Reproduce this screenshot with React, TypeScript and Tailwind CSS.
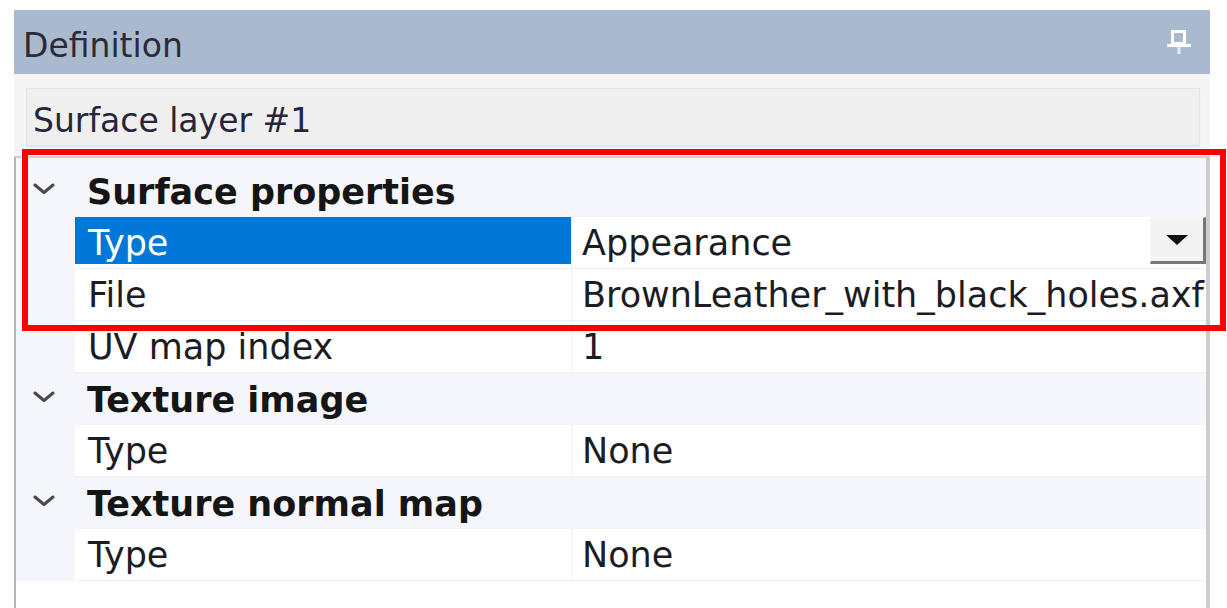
type Row =
  | { kind: 'cat'; label: string }
  | { kind: 'prop'; label: string; value: string; selected?: boolean; dropdown?: boolean }

const rows: Row[] = [
  { kind: 'cat', label: 'Surface properties' },
  { kind: 'prop', label: 'Type', value: 'Appearance', selected: true, dropdown: true },
  { kind: 'prop', label: 'File', value: 'BrownLeather_with_black_holes.axf' },
  { kind: 'prop', label: 'UV map index', value: '1' },
  { kind: 'cat', label: 'Texture image' },
  { kind: 'prop', label: 'Type', value: 'None' },
  { kind: 'cat', label: 'Texture normal map' },
  { kind: 'prop', label: 'Type', value: 'None' },
]

const PinIcon = () => (
  <svg width="26" height="26" viewBox="0 0 26 26" fill="none">
    <rect x="6.5" y="2.5" width="12" height="12" stroke="white" strokeWidth="3" />
    <rect x="1" y="15" width="24" height="3" fill="white" />
    <rect x="11.5" y="18" width="3" height="7" fill="#e8edf4" />
  </svg>
)

const Chevron = () => (
  <svg width="22" height="12" viewBox="0 0 22 12" fill="none">
    <path d="M2 2 L11 9.5 L20 2" stroke="#4a4a4a" strokeWidth="3" strokeLinecap="round" strokeLinejoin="round" />
  </svg>
)

const App = () => {
  return (
    <div className="relative w-[1227px] h-[608px] bg-white overflow-hidden font-['DejaVu_Sans',sans-serif] text-[#1c1c24]">
      <div className="ml-[14px] mt-[10px] w-[1196px]">
        {/* Header */}
        <div className="h-[64px] bg-[#a9bacf] flex items-center justify-between pl-[9px] pr-[18px]">
          <span className="pt-[6px] text-[33px] text-[#2a2a38] leading-none">Definition</span>
          <PinIcon />
        </div>

        {/* Layer name */}
        <div className="bg-[#f5f5f5] pt-[14px] pb-[10px] pl-[12px]">
          <div className="w-[1174px] h-[58px] bg-[#efefef] border border-[#e4e4e4] shadow-[0_1px_1px_rgba(0,0,0,0.06)] flex items-center pl-[6px]">
            <span className="pt-[6px] text-[33px] text-[#26263a] leading-none">Surface layer #1</span>
          </div>
        </div>

        {/* Property grid */}
        <div className="h-[460px] border-t-2 border-t-[#d2d2d2] border-l-2 border-l-[#b4b4b4] border-r-[4px] border-r-[#cdcdcd] bg-white">
          <div className="h-[7px] bg-[#f4f6fb]" />
          {rows.map((r, i) =>
            r.kind === 'cat' ? (
              <div key={i} className="h-[52px] bg-[#f4f6fb] flex items-center">
                <div className="w-[59px] flex justify-center pr-[4px] pb-[4px]">
                  <Chevron />
                </div>
                <span className="pl-[12px] pt-[2px] text-[35px] font-bold leading-none text-[#151515]">{r.label}</span>
              </div>
            ) : (
              <div key={i} className="h-[52px] flex">
                <div className="w-[59px] bg-[#f4f6fb]" />
                <div className="w-[497px] border-b border-b-[#eef0f4] border-r border-r-[#eef0f4] bg-white">
                  <div className={`h-[47px] flex items-center pl-[13px] ${r.selected ? 'bg-[#0078d7] text-white' : ''}`}>
                    <span className="pt-[6px] text-[35px] leading-none">{r.label}</span>
                  </div>
                </div>
                <div className="flex-1 flex items-start border-b border-b-[#eef0f4] bg-white">
                  <div className="h-[47px] flex-1 flex items-center pl-[10px]">
                    <span className="pt-[6px] text-[35px] leading-none whitespace-nowrap">{r.value}</span>
                  </div>
                  {r.dropdown && (
                    <div className="w-[56px] h-[47px] bg-[#f3f3f3] border-t border-l border-[#fafafa] border-b-[3px] border-r-[3px] border-b-[#777] border-r-[#777] flex items-center justify-center">
                      <svg width="22" height="10" viewBox="0 0 22 10">
                        <path d="M0 0 H22 L11 10 Z" fill="#111" />
                      </svg>
                    </div>
                  )}
                </div>
              </div>
            ),
          )}
        </div>
      </div>

      {/* Annotation box */}
      <div className="absolute left-[22px] top-[149px] w-[1204px] h-[182px] border-[6px] border-[#ff0000]" />
    </div>
  )
}

export default App
